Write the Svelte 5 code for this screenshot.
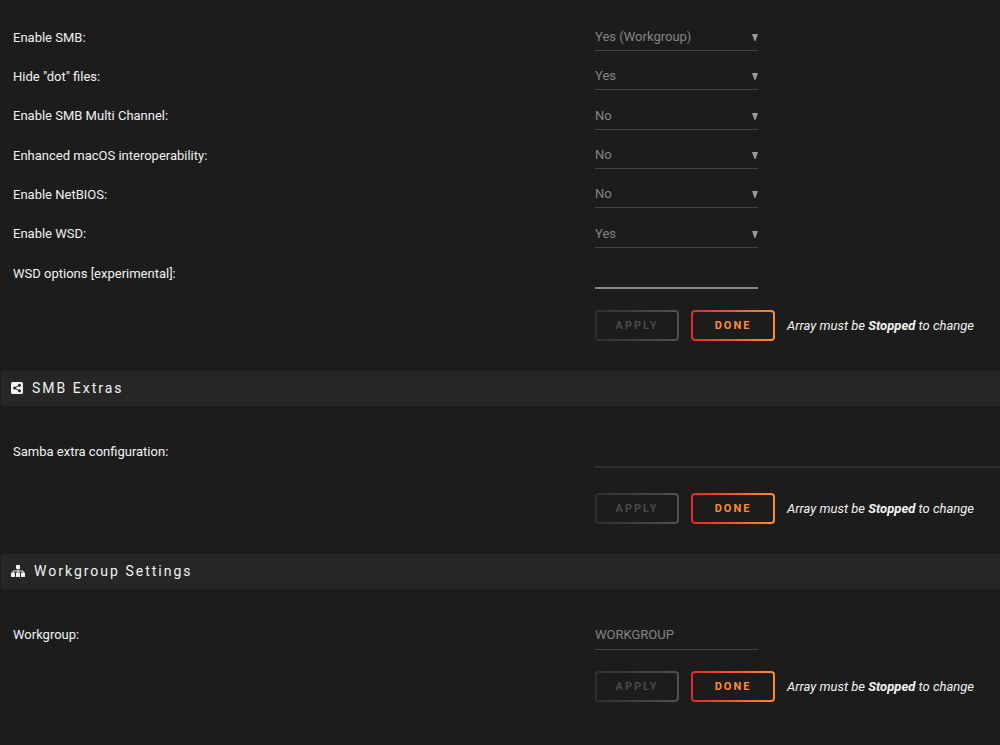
<script>
  const options = [
    { id: 'smb', label: 'Enable SMB:', value: 'Yes (Workgroup)', choices: ['Yes (Workgroup)', 'No'] },
    { id: 'dot', label: 'Hide "dot" files:', value: 'Yes', choices: ['Yes', 'No'] },
    { id: 'multi', label: 'Enable SMB Multi Channel:', value: 'No', choices: ['Yes', 'No'] },
    { id: 'macos', label: 'Enhanced macOS interoperability:', value: 'No', choices: ['Yes', 'No'] },
    { id: 'netbios', label: 'Enable NetBIOS:', value: 'No', choices: ['Yes', 'No'] },
    { id: 'wsd', label: 'Enable WSD:', value: 'Yes', choices: ['Yes', 'No'] }
  ];
</script>

{#snippet actions()}
  <div class="actions">
    <button type="button" class="apply" disabled>Apply</button>
    <button type="button" class="done">Done</button>
    <em>Array must be <strong>Stopped</strong> to change</em>
  </div>
{/snippet}

<main>
  <form class="smb">
    <div class="options">
      {#each options as option (option.id)}
        <div class="row">
          <label for={option.id}>{option.label}</label>
          <div class="pick">
            <select id={option.id} value={option.value} disabled>
              {#each option.choices as choice}
                <option value={choice}>{choice}</option>
              {/each}
            </select>
            <svg viewBox="0 0 6 7" width="6" height="7" aria-hidden="true"><path d="M0 0h6L3.5 7h-1z" /></svg>
          </div>
        </div>
      {/each}
    </div>
    <div class="row text">
      <label for="wsdopt">WSD options [experimental]:</label>
      <input id="wsdopt" type="text" class="active" />
    </div>
    {@render actions()}
  </form>

  <h2>
    <svg viewBox="0 0 12 12" width="12" height="12" aria-hidden="true">
      <rect width="12" height="12" rx="1.6" fill="#f2f2f2" />
      <path d="M8.4 3.3 3.6 6l4.8 2.7" fill="none" stroke="#262626" stroke-width="1" />
      <g fill="#262626"><circle cx="8.5" cy="3.3" r="1.5" /><circle cx="3.6" cy="6" r="1.5" /><circle cx="8.5" cy="8.7" r="1.5" /></g>
    </svg>
    SMB Extras
  </h2>
  <form class="extras">
    <div class="row area">
      <label for="extra">Samba extra configuration:</label>
      <textarea id="extra" rows="1" disabled></textarea>
    </div>
    {@render actions()}
  </form>

  <h2>
    <svg viewBox="0 0 14 12" width="14" height="12" aria-hidden="true">
      <g fill="#f2f2f2">
        <rect x="5" width="4" height="4" rx=".4" />
        <rect y="7.5" width="4" height="4.5" rx=".4" />
        <rect x="5" y="7.5" width="4" height="4.5" rx=".4" />
        <rect x="10" y="7.5" width="4" height="4.5" rx=".4" />
      </g>
      <path d="M7 4v4M2 8V6h10v2" fill="none" stroke="#f2f2f2" />
    </svg>
    Workgroup Settings
  </h2>
  <form class="group">
    <div class="row text">
      <label for="workgroup">Workgroup:</label>
      <input id="workgroup" type="text" value="WORKGROUP" disabled />
    </div>
    {@render actions()}
  </form>
</main>

<style>
  :global(body) {
    margin: 0;
    background: #1c1c1c;
  }
  main {
    color: #f2f2f2;
    font: 400 13px/20px Roboto, sans-serif;
    overflow-x: hidden;
  }
  form {
    margin: 0;
  }
  .smb {
    padding: 18px 0 30px;
  }
  .options {
    display: grid;
    grid-auto-rows: 1fr;
    min-height: 236px;
  }
  .row {
    display: grid;
    grid-template-columns: 59.5% 1fr;
    align-items: center;
  }
  .row.text,
  .row.area {
    min-height: 40px;
  }
  label {
    padding-left: 13px;
  }
  .pick {
    display: grid;
    align-items: center;
    width: 163px;
  }
  .pick > * {
    grid-area: 1 / 1;
  }
  .pick svg {
    justify-self: end;
    fill: #999;
    pointer-events: none;
  }
  select,
  input,
  textarea {
    box-sizing: border-box;
    width: 163px;
    height: 27px;
    margin: 0;
    padding: 0;
    border: 0;
    border-bottom: 1px solid #444;
    border-radius: 0;
    background: none;
    color: #848484;
    font: inherit;
    outline: none;
    opacity: 1;
    appearance: none;
  }
  input {
    height: 30px;
  }
  .active {
    border-bottom: 2px solid #888;
  }
  textarea {
    display: block;
    width: 100%;
    height: 32px;
    border-bottom: 2px solid #2f2f2f;
    resize: none;
  }
  .actions {
    display: flex;
    align-items: center;
    gap: 12px;
    margin-left: 59.5%;
    padding-top: 16px;
    white-space: nowrap;
  }
  button {
    box-sizing: border-box;
    min-width: 84px;
    height: 31px;
    padding: 0;
    border: 2px solid transparent;
    border-radius: 4px;
    font: 700 11px/20px Roboto, sans-serif;
    letter-spacing: 2px;
    text-transform: uppercase;
  }
  .apply {
    color: #4a4a4a;
    background:
      linear-gradient(#1c1c1c, #1c1c1c) padding-box,
      linear-gradient(90deg, #2f2f2f, #505050) border-box;
  }
  .done {
    color: #ff8c2f;
    background:
      linear-gradient(#1c1c1c, #1c1c1c) padding-box,
      linear-gradient(90deg, #e22828, #ff8c2f) border-box;
    cursor: pointer;
  }
  h2 {
    display: flex;
    align-items: center;
    gap: 9px;
    box-sizing: border-box;
    height: 35px;
    margin: 0 0 0 1px;
    padding: 0 0 2px 10px;
    background: #262626;
    font: 400 14px/20px Roboto, sans-serif;
    letter-spacing: 2px;
  }
  .extras {
    padding: 26px 0 30px;
  }
  .extras .actions {
    padding-top: 21px;
  }
  .group {
    padding: 26px 0 42px;
  }
</style>
